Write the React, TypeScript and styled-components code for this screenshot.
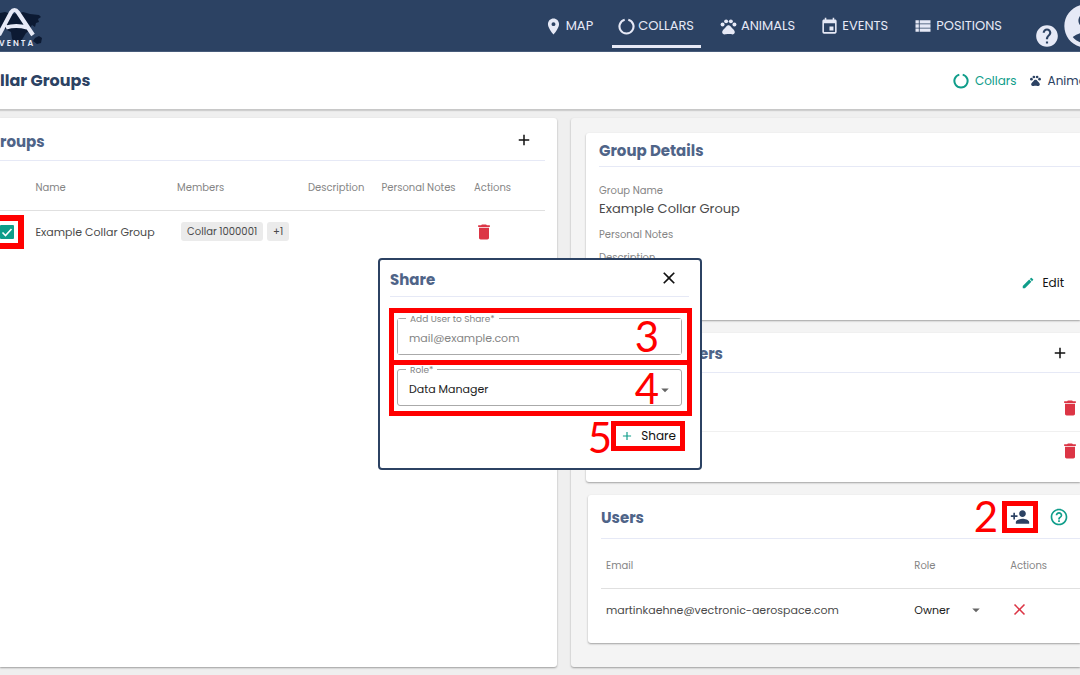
import React from "react";
import styled, { createGlobalStyle } from "styled-components";
import {
  MdAccountCircle,
  MdAdd,
  MdArrowDropDown,
  MdClose,
  MdDelete,
  MdEdit,
  MdEvent,
  MdHelp,
  MdHelpOutline,
  MdPersonAdd,
  MdPets,
  MdPlace,
  MdViewList,
} from "react-icons/md";

const color = {
  navy: "#2c4263",
  heading: "#4f6488",
  pale: "#e6e9f6",
  teal: "#0f9d8a",
  red: "#dc3545",
  mark: "#ff0000",
  muted: "#858585",
  line: "#e0e0e0",
};

const GlobalStyle = createGlobalStyle`
  *, *::before, *::after { box-sizing: border-box; }
  body {
    margin: 0;
    overflow: hidden;
    background: #efefef;
    color: #4a4a4a;
    font-family: Poppins, Inter, sans-serif;
    font-size: 12px;
    line-height: 18px;
  }
  h1, h2, p, dl, dd, ul { margin: 0; padding: 0; }
  button, input, select { font: inherit; color: inherit; }
`;

const Page = styled.div`
  display: flex;
  flex-direction: column;
  min-height: 100vh;
`;

const TopBar = styled.header`
  display: flex;
  justify-content: space-between;
  height: 52px;
  overflow: hidden;
  background: ${color.navy};
  border-bottom: 1px solid #475b7a;
  color: ${color.pale};
`;

const Logo = styled.svg`
  flex: none;
  width: 44px;
  height: 51px;
`;

const TopRight = styled.div`
  display: flex;
  flex: none;
  margin-right: -32px;
`;

const Nav = styled.nav`
  display: flex;
  gap: 12px;
  margin-right: 25px;
`;

const NavLink = styled.a<{ $active?: boolean }>`
  display: flex;
  align-items: center;
  gap: 3px;
  height: 48px;
  padding: 7px 7px 0 6px;
  border-bottom: 3px solid ${(p) => (p.$active ? color.pale : "transparent")};
  color: ${color.pale};
  font-size: 13px;
  text-decoration: none;
  svg { flex: none; }
`;

const IconButton = styled.button<{ $tone?: string }>`
  display: flex;
  flex: none;
  align-items: center;
  justify-content: center;
  padding: 0;
  border: 0;
  background: none;
  color: ${(p) => p.$tone ?? "#111"};
`;

const HelpSlot = styled.div`
  display: flex;
  padding-top: 20px;
`;

const SubBar = styled.div`
  display: flex;
  align-items: center;
  justify-content: space-between;
  height: 58px;
  background: #fff;
  border-bottom: 1px solid #c8c8c8;
  box-shadow: 0 1px 1px #cfcfcf;
  overflow: hidden;
`;

const PageTitle = styled.h1`
  color: ${color.navy};
  font-size: 16px;
  line-height: 24px;
  font-weight: 700;
`;

const Tabs = styled.nav`
  display: flex;
  flex: none;
  gap: 12px;
  margin-right: -16px;
`;

const TabLink = styled.a<{ $active?: boolean }>`
  display: flex;
  align-items: center;
  gap: 6px;
  color: ${(p) => (p.$active ? color.teal : color.navy)};
  text-decoration: none;
`;

const Main = styled.main`
  display: grid;
  flex: 1;
  grid-template-columns: 557fr 509fr;
  gap: 14px;
  padding: 8px 0;
`;

const GroupsPanel = styled.section`
  padding: 2px 12px 0 0;
  background: #fff;
  border-radius: 0 3px 3px 0;
  box-shadow: 0 1px 2px rgba(0, 0, 0, 0.35);
`;

const DetailPanel = styled.section`
  display: flex;
  flex-direction: column;
  gap: 13px;
  min-width: 0;
  padding: 15px 0 24px 15px;
  background: #f4f4f4;
  border-radius: 3px 0 0 3px;
  box-shadow: 0 1px 2px rgba(0, 0, 0, 0.35);
`;

const Card = styled.section<{ $height: number }>`
  min-height: ${(p) => p.$height}px;
  padding-left: 13px;
  background: #fff;
  border-radius: 3px 0 0 3px;
  box-shadow: 0 1px 2px rgba(0, 0, 0, 0.35);
`;

const CardHead = styled.div<{ $height: number; $right?: number }>`
  display: flex;
  align-items: center;
  justify-content: space-between;
  height: ${(p) => p.$height}px;
  padding-right: ${(p) => p.$right ?? 0}px;
  border-bottom: 1px solid ${color.pale};
`;

const Heading = styled.h2`
  padding-top: 3px;
  color: ${color.heading};
  font-size: 15px;
  line-height: 22px;
  font-weight: 700;
`;

const Table = styled.table`
  width: 100%;
  table-layout: fixed;
  border-collapse: collapse;
  text-align: left;
  th {
    height: 49px;
    padding: 5px 0 0;
    border-bottom: 1px solid ${color.line};
    color: ${color.muted};
    font-size: 10px;
    font-weight: 400;
    white-space: nowrap;
  }
  td {
    height: 43px;
    padding: 0;
    font-size: 11px;
    white-space: nowrap;
  }
`;

const UsersTable = styled(Table)`
  th, td { padding-left: 2px; }
  th:first-child, td:first-child { padding-left: 5px; }
`;

const CheckCell = styled.div`
  position: relative;
  display: flex;
  align-items: center;
  height: 22px;
`;

const Checkbox = styled.input`
  appearance: none;
  width: 14px;
  height: 14px;
  margin: 0;
  border-radius: 1px;
  background: ${color.teal};
`;

const Tick = styled.svg`
  position: absolute;
  left: 1px;
  top: 4px;
  width: 12px;
  height: 14px;
  pointer-events: none;
`;

const CheckMark = styled.span`
  position: absolute;
  left: -8px;
  top: -6px;
  width: 32px;
  height: 34px;
  border: 6px solid ${color.mark};
  pointer-events: none;
`;

const Chips = styled.div`
  display: flex;
  gap: 4px;
  padding-left: 4px;
`;

const Chip = styled.span`
  padding: 0 6px;
  border-radius: 3px;
  background: #ebebeb;
  font-size: 10px;
  line-height: 19px;
`;

const Details = styled.dl`
  padding-top: 15px;
  dt {
    color: ${color.muted};
    font-size: 10px;
    line-height: 18px;
  }
  dd {
    padding-bottom: 8px;
    font-size: 13px;
    line-height: 18px;
  }
  dd:empty { padding-bottom: 5px; }
`;

const EditRow = styled.div`
  display: flex;
  justify-content: flex-end;
  padding: 2px 16px 0 0;
`;

const TextButton = styled.button`
  display: flex;
  align-items: center;
  gap: 7px;
  padding: 0;
  border: 0;
  background: none;
  color: #111;
  svg { color: ${color.teal}; }
`;

const MemberList = styled.ul`
  padding-top: 12px;
  list-style: none;
`;

const Member = styled.li`
  display: flex;
  align-items: center;
  justify-content: flex-end;
  height: 46px;
  & + & {
    height: 38px;
    border-top: 1px solid #f0f0f0;
  }
`;

const UsersCard = styled(Card)`
  margin-left: 2px;
`;

const UserTools = styled.div`
  position: relative;
  display: flex;
  align-items: center;
  gap: 11px;
  padding-top: 1px;
`;

const Highlight = styled.div`
  display: flex;
  border: 5px solid ${color.mark};
`;

const AddUserMark = styled(Highlight)`
  padding: 1px 3px;
`;

const Step = styled.span<{ $right: number; $top: number }>`
  position: absolute;
  right: ${(p) => p.$right}px;
  top: ${(p) => p.$top}px;
  color: ${color.mark};
  font-family: Lato, sans-serif;
  font-size: 42px;
  line-height: 42px;
  pointer-events: none;
`;

const RoleSelect = styled.div`
  position: relative;
  width: 71px;
  svg { position: absolute; right: 0; top: 0; pointer-events: none; color: #666; }
`;

const Select = styled.select`
  appearance: none;
  width: 100%;
  padding: 0;
  border: 0;
  background: transparent;
  color: #222;
`;

const Dialog = styled.div`
  position: absolute;
  top: 258px;
  left: 50%;
  width: 324px;
  min-height: 212px;
  padding: 0 8px 0 9px;
  transform: translateX(-50%);
  background: #fff;
  border: 2px solid ${color.navy};
  border-radius: 4px;
`;

const DialogHead = styled(CardHead)`
  margin: 0 3px 11px 1px;
`;

const FieldMark = styled.div`
  position: relative;
  border: 5px solid ${color.mark};
  padding: 5px 5px 5px 3px;
  & + & {
    margin-top: -5px;
    padding-top: 4px;
  }
`;

const Field = styled.div`
  position: relative;
  height: 37px;
  border: 1px solid #aaa;
  border-radius: 3px;
  font-size: 11px;
  label {
    position: absolute;
    left: 8px;
    top: -5px;
    padding: 0 4px;
    background: #fff;
    color: ${color.muted};
    font-size: 9px;
    line-height: 10px;
  }
  input, select {
    width: 100%;
    height: 100%;
    padding: 3px 11px 0;
    border: 0;
    outline: 0;
  }
  input::placeholder { color: #858585; opacity: 1; }
  svg { position: absolute; right: 7px; top: 11px; color: #666; pointer-events: none; }
`;

const DialogActions = styled.form`
  position: relative;
  display: flex;
  justify-content: flex-end;
  padding: 5px 7px 0 0;
`;

const ShareMark = styled(Highlight)`
  padding: 1px 4px;
`;

function CollarIcon({ size }: { size: number }) {
  return (
    <svg width={size} height={size} viewBox="0 0 16 16" fill="none" aria-hidden="true">
      <path d="M9.700 1.600A6.600 6.600 0 1 1 6.300 1.600" stroke="currentColor" strokeWidth="2" />
    </svg>
  );
}

function BrandLogo() {
  return (
    <Logo viewBox="0 0 44 51" role="img" aria-label="Inventa">
      <path
        fill="#0c1a33"
        d="M0 13l5-1 7 2 8-1 3-1 7 2 9 1 2 2-3 2 1 3-3 1-1 4-3-2-2 3 2 4-3-1-3 2-3 5-3 5-4 1-4-5-1-7-6-3-6-1zM35 38l4-2 3 2-1 5-4 1-4-3z"
      />
      <path
        d="M-1 35L11 12.500Q14.500 7.500 18 12.500L33 35M6 27.500Q16 24.500 27 27.500"
        fill="none"
        stroke="#e6e9f6"
        strokeWidth="4.200"
      />
      <text x="-1" y="46" fill="#e6e9f6" fontFamily="Poppins, Inter, sans-serif" fontSize="8" fontWeight="600" letterSpacing="2">
        VENTA
      </text>
    </Logo>
  );
}

export default function App() {
  return (
    <>
      <GlobalStyle />
      <Page>
        <TopBar>
          <BrandLogo />
          <TopRight>
            <Nav>
              <NavLink href="#map"><MdPlace size={19} />MAP</NavLink>
              <NavLink href="#collars" $active><CollarIcon size={17} />COLLARS</NavLink>
              <NavLink href="#animals"><MdPets size={19} />ANIMALS</NavLink>
              <NavLink href="#events"><MdEvent size={19} />EVENTS</NavLink>
              <NavLink href="#positions"><MdViewList size={20} />POSITIONS</NavLink>
            </Nav>
            <HelpSlot>
              <IconButton $tone={color.pale} aria-label="Help"><MdHelp size={26} /></IconButton>
            </HelpSlot>
            <IconButton $tone={color.pale} aria-label="Account"><MdAccountCircle size={52} /></IconButton>
          </TopRight>
        </TopBar>
        <SubBar>
          <PageTitle>llar Groups</PageTitle>
          <Tabs>
            <TabLink href="#collar-groups" $active><CollarIcon size={16} />Collars</TabLink>
            <TabLink href="#animal-groups"><MdPets size={13} />Animals</TabLink>
          </Tabs>
        </SubBar>
        <Main>
          <GroupsPanel>
            <CardHead $height={41} $right={12}>
              <Heading>roups</Heading>
              <IconButton aria-label="Add group"><MdAdd size={18} /></IconButton>
            </CardHead>
            <Table>
              <colgroup>
                <col style={{ width: "6.500%" }} />
                <col style={{ width: "26%" }} />
                <col style={{ width: "24%" }} />
                <col style={{ width: "13.500%" }} />
                <col style={{ width: "17%" }} />
                <col />
              </colgroup>
              <thead>
                <tr>
                  <th />
                  <th>Name</th>
                  <th>Members</th>
                  <th>Description</th>
                  <th>Personal Notes</th>
                  <th>Actions</th>
                </tr>
              </thead>
              <tbody>
                <tr>
                  <td>
                    <CheckCell>
                      <Checkbox type="checkbox" defaultChecked aria-label="Select Example Collar Group" />
                      <Tick viewBox="0 0 12 14">
                        <path d="M1.500 7.500L4.500 10.500L10.500 4" fill="none" stroke="#fff" strokeWidth="1.600" />
                      </Tick>
                      <CheckMark />
                    </CheckCell>
                  </td>
                  <td>Example Collar Group</td>
                  <td><Chips><Chip>Collar 1000001</Chip><Chip>+1</Chip></Chips></td>
                  <td />
                  <td />
                  <td><IconButton $tone={color.red} aria-label="Delete group"><MdDelete size={20} /></IconButton></td>
                </tr>
              </tbody>
            </Table>
          </GroupsPanel>
          <DetailPanel>
            <Card $height={187}>
              <CardHead $height={34}><Heading>Group Details</Heading></CardHead>
              <Details>
                <dt>Group Name</dt>
                <dd>Example Collar Group</dd>
                <dt>Personal Notes</dt>
                <dd />
                <dt>Description</dt>
                <dd />
              </Details>
              <EditRow><TextButton><MdEdit size={14} />Edit</TextButton></EditRow>
            </Card>
            <Card $height={149}>
              <CardHead $height={40} $right={11}>
                <Heading>Group Members</Heading>
                <IconButton aria-label="Add member"><MdAdd size={18} /></IconButton>
              </CardHead>
              <MemberList>
                <Member><IconButton $tone={color.red} aria-label="Remove first collar"><MdDelete size={20} /></IconButton></Member>
                <Member><IconButton $tone={color.red} aria-label="Remove second collar"><MdDelete size={20} /></IconButton></Member>
              </MemberList>
            </Card>
            <UsersCard $height={148}>
              <CardHead $height={44} $right={11}>
                <Heading>Users</Heading>
                <UserTools>
                  <Step $right={71} $top={-5}>2</Step>
                  <AddUserMark>
                    <IconButton $tone={color.navy} aria-label="Add user"><MdPersonAdd size={20} /></IconButton>
                  </AddUserMark>
                  <IconButton $tone={color.teal} aria-label="About users"><MdHelpOutline size={20} /></IconButton>
                </UserTools>
              </CardHead>
              <UsersTable>
                <colgroup>
                  <col style={{ width: "65%" }} />
                  <col style={{ width: "20%" }} />
                  <col />
                </colgroup>
                <thead><tr><th>Email</th><th>Role</th><th>Actions</th></tr></thead>
                <tbody>
                  <tr>
                    <td>martinkaehne@vectronic-aerospace.com</td>
                    <td>
                      <RoleSelect>
                        <Select aria-label="User role" defaultValue="Owner"><option>Owner</option></Select>
                        <MdArrowDropDown size={18} />
                      </RoleSelect>
                    </td>
                    <td><IconButton $tone={color.red} aria-label="Remove user"><MdClose size={19} /></IconButton></td>
                  </tr>
                </tbody>
              </UsersTable>
            </UsersCard>
          </DetailPanel>
        </Main>
        <Dialog role="dialog" aria-labelledby="share-title">
          <DialogHead $height={37} $right={10}>
            <Heading id="share-title">Share</Heading>
            <IconButton aria-label="Close"><MdClose size={20} /></IconButton>
          </DialogHead>
          <FieldMark>
            <Field>
              <input id="share-user" type="email" placeholder="mail@example.com" />
              <label htmlFor="share-user">Add User to Share*</label>
            </Field>
            <Step $right={28} $top={2}>3</Step>
          </FieldMark>
          <FieldMark>
            <Field>
              <Select id="share-role" defaultValue="Data Manager"><option>Data Manager</option></Select>
              <label htmlFor="share-role">Role*</label>
              <MdArrowDropDown size={18} />
            </Field>
            <Step $right={28} $top={2}>4</Step>
          </FieldMark>
          <DialogActions>
            <Step $right={80} $top={0}>5</Step>
            <ShareMark><TextButton type="button"><MdAdd size={14} />Share</TextButton></ShareMark>
          </DialogActions>
        </Dialog>
      </Page>
    </>
  );
}
